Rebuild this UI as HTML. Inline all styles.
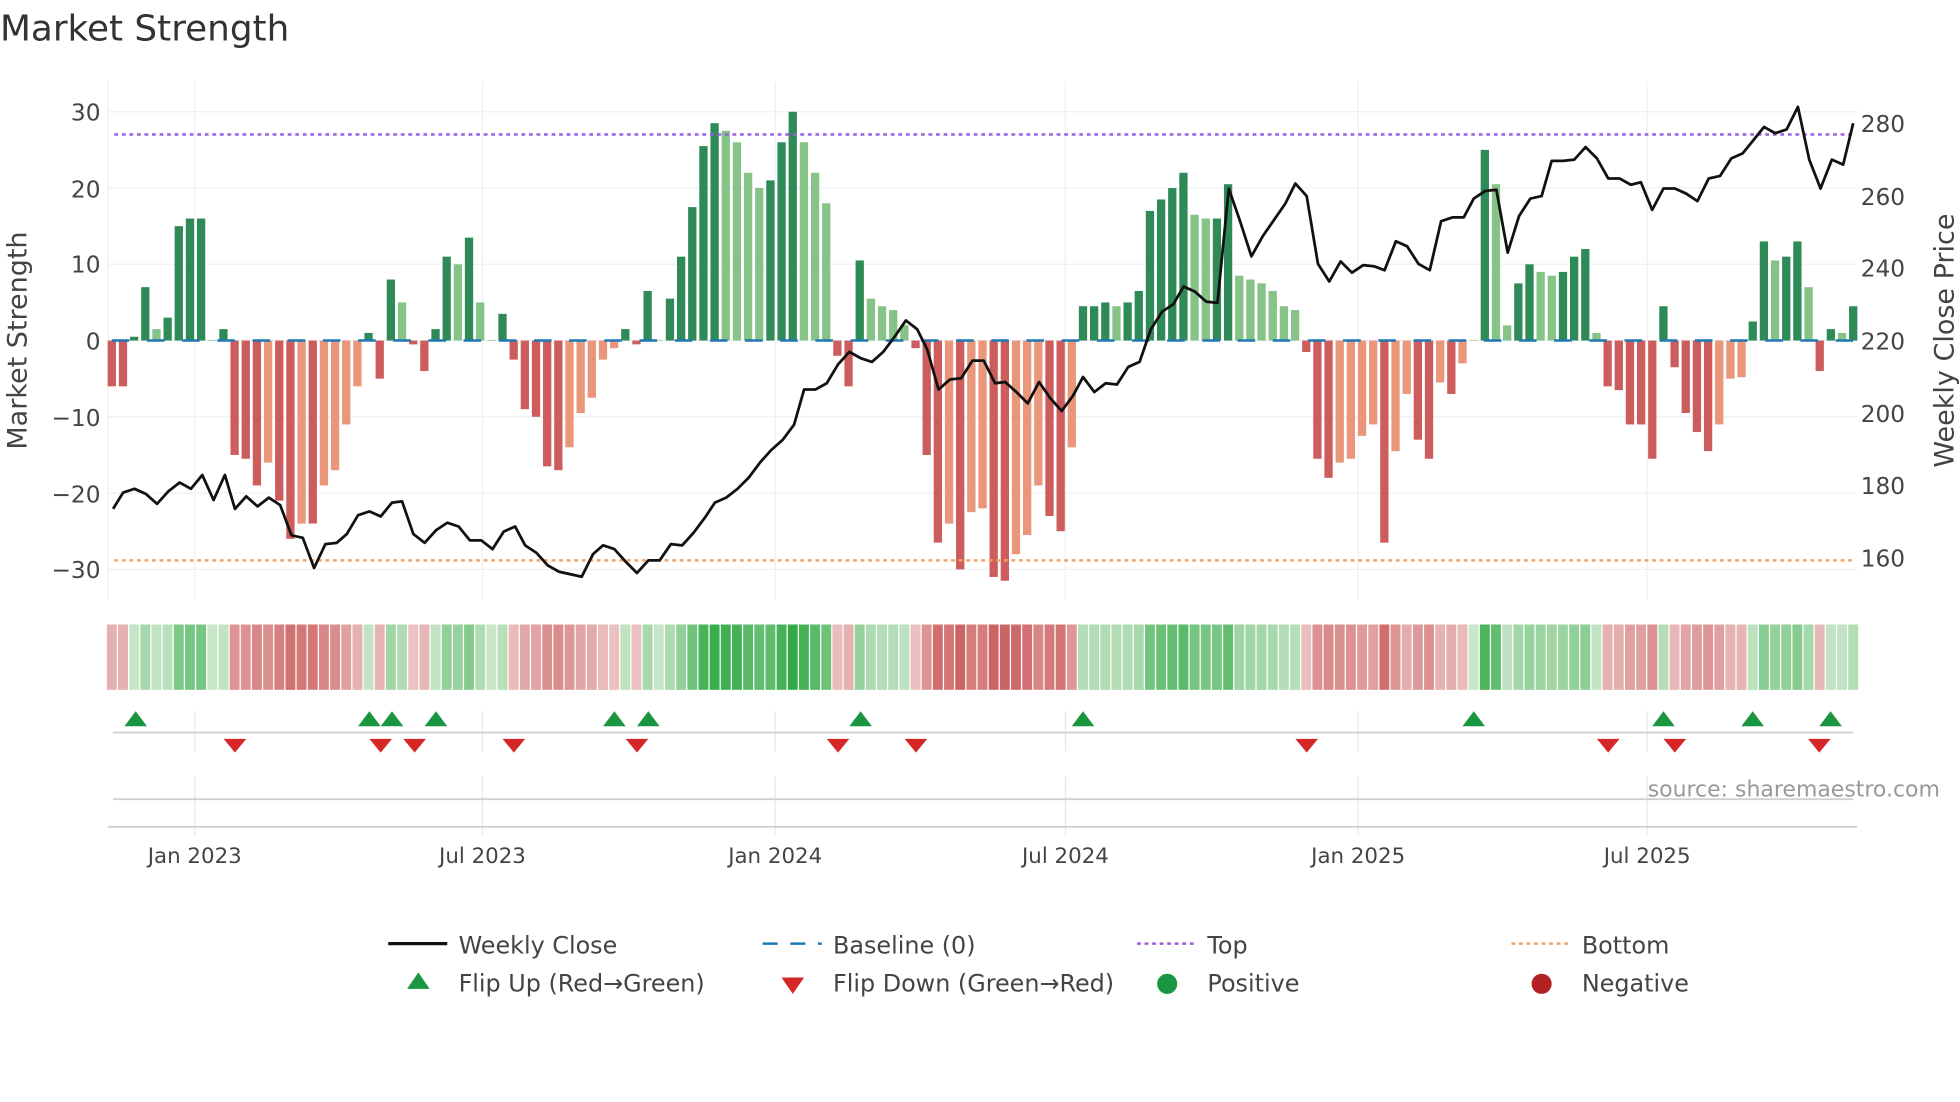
<!DOCTYPE html>
<html><head><meta charset="utf-8"><style>
html,body{margin:0;padding:0;background:#fff;}
svg{display:block;font-family:"DejaVu Sans","Liberation Sans",sans-serif;}
</style></head><body>
<svg id="s" width="1960" height="1102" viewBox="0 0 1560 877" xmlns="http://www.w3.org/2000/svg">
<rect width="1560" height="877" fill="#fff"/>
<text x="0" y="32" font-size="28.5" fill="#333">Market Strength</text>
<g id="grid"></g>
<g id="bars"></g>
<g id="heat"></g>
<line x1="91" y1="107" x2="1475" y2="107" stroke="#9b5de5" stroke-width="2" stroke-dasharray="3,3"/>
<line x1="91" y1="446" x2="1475" y2="446" stroke="#f4a261" stroke-width="2" stroke-dasharray="3,3"/>
<polyline id="price" fill="none" stroke="#111" stroke-width="2.2" stroke-linejoin="round"/>
<g id="marks"></g>
<g font-size="18.5" fill="#444" text-anchor="end">
<text x="80" y="96">30</text><text x="80" y="157">20</text><text x="80" y="217">10</text><text x="80" y="278">0</text>
<text x="80" y="339">−10</text><text x="80" y="400">−20</text><text x="80" y="460">−30</text>
</g>
<g font-size="18.5" fill="#444">
<text x="1481" y="105">280</text><text x="1481" y="163">260</text><text x="1481" y="220">240</text><text x="1481" y="278">220</text>
<text x="1481" y="336">200</text><text x="1481" y="393">180</text><text x="1481" y="451">160</text>
</g>
<text transform="translate(21,271) rotate(-90)" font-size="21.5" fill="#444" text-anchor="middle">Market Strength</text>
<text transform="translate(1555,271) rotate(-90)" font-size="21.5" fill="#444" text-anchor="middle">Weekly Close Price</text>
<text x="1544" y="634" font-size="17.5" fill="#999" text-anchor="end">source: sharemaestro.com</text>
<g font-size="17" fill="#444" text-anchor="middle">
<text x="155" y="687">Jan 2023</text><text x="384" y="687">Jul 2023</text><text x="617" y="687">Jan 2024</text>
<text x="848" y="687">Jul 2024</text><text x="1081" y="687">Jan 2025</text><text x="1311" y="687">Jul 2025</text>
</g>
<g font-size="19" fill="#444">
<line x1="309" y1="751" x2="356" y2="751" stroke="#111" stroke-width="2.5"/>
<text x="365" y="759">Weekly Close</text>
<line x1="607" y1="751" x2="654" y2="751" stroke="#1f77b4" stroke-width="2" stroke-dasharray="12,10"/>
<text x="663" y="759">Baseline (0)</text>
<line x1="905" y1="751" x2="952" y2="751" stroke="#9b5de5" stroke-width="2" stroke-dasharray="3,3"/>
<text x="961" y="759">Top</text>
<line x1="1203" y1="751" x2="1250" y2="751" stroke="#f4a261" stroke-width="2" stroke-dasharray="3,3"/>
<text x="1259" y="759">Bottom</text>
<polygon points="333,774 342,787 324,787" fill="#1a9641"/>
<text x="365" y="789">Flip Up (Red→Green)</text>
<polygon points="622,778 640,778 631,791" fill="#d62728"/>
<text x="663" y="789">Flip Down (Green→Red)</text>
<circle cx="929" cy="783" r="8" fill="#1a9641"/>
<text x="961" y="789">Positive</text>
<circle cx="1227" cy="783" r="8" fill="#b22222"/>
<text x="1259" y="789">Negative</text>
</g>
</svg>
<script>
var NS="http://www.w3.org/2000/svg";
function el(t,a,p){var e=document.createElementNS(NS,t);for(var k in a)e.setAttribute(k,a[k]);document.getElementById(p).appendChild(e);return e;}
var v=[-6,-6,0.5,7,1.5,3,15,16,16,0,1.5,-15,-15.5,-19,-16,-21,-26,-24,-24,-19,-17,-11,-6,1,-5,8,5,-0.5,-4,1.5,11,10,13.5,5,0,3.5,-2.5,-9,-10,-16.5,-17,-14,-9.5,-7.5,-2.5,-1,1.5,-0.5,6.5,0,5.5,11,17.5,25.5,28.5,27.5,26,22,20,21,26,30,26,22,18,-2,-6,10.5,5.5,4.5,4,2,-1,-15,-26.5,-24,-30,-22.5,-22,-31,-31.5,-28,-25.5,-19,-23,-25,-14,4.5,4.5,5,4.5,5,6.5,17,18.5,20,22,16.5,16,16,20.5,8.5,8,7.5,6.5,4.5,4,-1.5,-15.5,-18,-16,-15.5,-12.5,-11,-26.5,-14.5,-7,-13,-15.5,-5.5,-7,-3,0,25,20.5,2,7.5,10,9,8.5,9,11,12,1,-6,-6.5,-11,-11,-15.5,4.5,-3.5,-9.5,-12,-14.5,-11,-5,-4.8,2.5,13,10.5,11,13,7,-4,1.5,1,4.5];
var n=v.length,x0=89,dx=(1475-89)/(n-1),y0=271,k=6.07;
[30,20,10,0,-10,-20,-30].forEach(function(t){el('line',{x1:86,x2:1478,y1:y0-t*k,y2:y0-t*k,stroke:'#eef0f3','stroke-width':1},'grid');});
[155,384,617,848,1081,1311].forEach(function(x){el('line',{x1:x,x2:x,y1:65,y2:478,stroke:'#eef0f3'},'grid');el('line',{x1:x,x2:x,y1:566,y2:598,stroke:'#e6e8eb'},'grid');el('line',{x1:x,x2:x,y1:618,y2:665,stroke:'#e6e8eb'},'grid');});
el('line',{x1:86,x2:86,y1:65,y2:478,stroke:'#eef0f3'},'grid');
el('line',{x1:90,x2:1475,y1:583,y2:583,stroke:'#d0d0d0','stroke-width':1.5},'grid');
el('line',{x1:90,x2:1475,y1:636,y2:636,stroke:'#d0d0d0','stroke-width':1.5},'grid');
el('line',{x1:86,x2:1478,y1:658,y2:658,stroke:'#d0d0d0','stroke-width':1.5},'grid');
for(var i=0;i<n;i++){var x=x0+i*dx,a=v[i],p=i?v[i-1]:0;
 var strong=(Math.abs(a)>=Math.abs(p))||(a*p<0);
 var c=a>=0?(strong?'#2e8b57':'#86c386'):(strong?'#cd5c5c':'#e9967a');
 var h=Math.abs(a)*k;if(h<0.5)h=0.5;
 el('rect',{x:x-3.3,y:a>=0?y0-h:y0,width:6.6,height:h,fill:c},'bars');
 var t=Math.min(Math.abs(a)/30,1),col;
 if(a>=0){var r=Math.round(200-t*150),g=Math.round(230-t*60),b=Math.round(200-t*130);col='rgb('+r+','+g+','+b+')';}
 else{var r=Math.round(235-t*30),g=Math.round(195-t*95),b=Math.round(195-t*95);col='rgb('+r+','+g+','+b+')';}
 el('rect',{x:x-dx/2+0.5,y:497,width:dx-1,height:52,fill:col},'heat');
}
for(var x=89;x<1475;x+=28){el('line',{x1:x,x2:x+14,y1:y0,y2:y0,stroke:'#1f77b4','stroke-width':2},'bars');}
var pts=[[90,405],[98,392],[107,389],[116,393],[125,401],[134,391],[143,384],[152,389],[161,378],[170,398],[179,378],[187,405],[196,395],[205,403],[214,396],[223,402],[232,426],[241,428],[250,452],[259,433],[268,432],[276,425],[285,410],[294,407],[303,411],[312,400],[320,399],[329,425],[338,432],[347,422],[356,416],[365,419],[374,430],[383,430],[392,437],[401,423],[410,419],[418,434],[427,440],[436,450],[445,455],[454,457],[463,459],[472,441],[480,434],[489,437],[498,447],[507,456],[516,446],[525,446],[534,433],[543,434],[552,424],[561,412],[569,400],[578,396],[587,389],[596,380],[605,368],[614,358],[623,350],[632,338],[640,310],[649,310],[658,305],[667,290],[676,280],[685,285],[694,288],[703,280],[712,268],[721,255],[730,262],[738,278],[747,310],[756,302],[765,301],[774,287],[783,287],[792,305],[800,304],[809,312],[818,321],[827,304],[836,317],[845,327],[854,315],[862,300],[871,312],[880,305],[889,306],[898,292],[907,288],[916,262],[925,248],[934,242],[942,228],[951,232],[960,240],[969,241],[978,150],[987,176],[996,204],[1005,188],[1014,175],[1023,162],[1031,146],[1040,156],[1049,210],[1058,224],[1067,208],[1076,217],[1085,211],[1094,212],[1102,215],[1111,192],[1120,196],[1129,210],[1138,215],[1147,176],[1156,173],[1165,173],[1173,158],[1182,152],[1191,151],[1200,201],[1209,172],[1218,158],[1227,156],[1235,128],[1244,128],[1253,127],[1262,117],[1271,126],[1280,142],[1289,142],[1298,147],[1306,145],[1315,167],[1324,150],[1333,150],[1342,154],[1351,160],[1360,142],[1369,140],[1378,126],[1387,122],[1396,111],[1404,101],[1413,106],[1422,103],[1431,85],[1440,127],[1449,150],[1458,127],[1467,131],[1475,98]];
document.getElementById('price').setAttribute('points',pts.map(function(p){return p.join(',')}).join(' '));
[108,294,312,347,489,516,685,862,1173,1324,1395,1457].forEach(function(x){el('polygon',{points:x+',566 '+(x+9)+',578 '+(x-9)+',578',fill:'#1a9641'},'marks');});
[187,303,330,409,507,667,729,1040,1280,1333,1448].forEach(function(x){el('polygon',{points:(x-9)+',588 '+(x+9)+',588 '+x+',599',fill:'#d62728'},'marks');});
</script>
</body></html>
